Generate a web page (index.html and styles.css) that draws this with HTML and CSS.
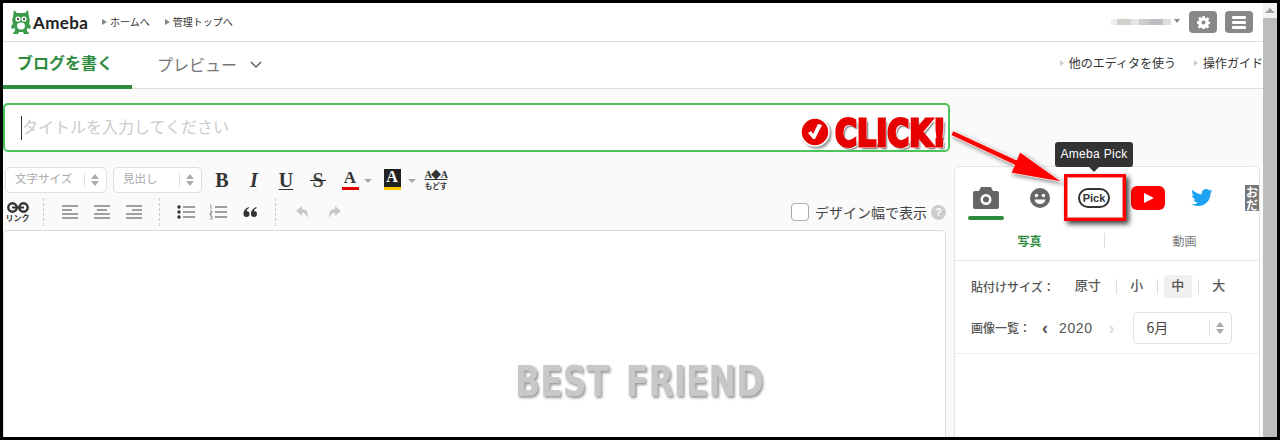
FILE: index.html
```html
<!DOCTYPE html>
<html lang="ja">
<head>
  <meta charset="UTF-8">
  <title>Ameba ブログを書く</title>
  <link rel="stylesheet" href="styles.css">
</head>
<body>
  <div class="frame">
    <div class="page">
      <header class="topbar">
        <div class="logo">
          <svg width="20" height="24" viewBox="0 0 20 24"><path fill="#3b9c4b" d="M3 0l3 3h8l3-3 1 7c1 2 1 5 0 7l2 2-1 3-3-1v3l2 2v1h-5l-1-2H8l-1 2H2v-1l2-2v-3l-3 1-1-3 2-2c-1-2-1-5 0-7z"/><circle cx="7" cy="9" r="2.6" fill="#fff"/><circle cx="13" cy="9" r="2.6" fill="#fff"/><circle cx="7" cy="9" r="1.1" fill="#222"/><circle cx="13" cy="9" r="1.1" fill="#222"/><ellipse cx="10" cy="16" rx="4" ry="3.4" fill="#fff"/></svg>
          <span class="logo-text">Ameba</span>
        </div>
        <a class="nav-link">ホームへ</a>
        <a class="nav-link">管理トップへ</a>
        <div class="user">
          <span class="blur-name"><i class="b1"></i><i class="b2"></i><i class="b3"></i><i class="b4"></i><i class="b5"></i><i class="b6"></i></span>
          <span class="caret"></span>
        </div>
        <button class="head-btn">
          <svg width="13" height="13" viewBox="0 0 16 16"><path fill="#fff" fill-rule="evenodd" d="M6.600 0h2.800l.4 2.200 1.300.6 1.900-1.300 2 2-1.300 1.900.6 1.300 2.200.4v2.800l-2.200.4-.6 1.300 1.300 1.900-2 2-1.900-1.300-1.300.6-.4 2.200H6.600l-.4-2.200-1.300-.6-1.900 1.300-2-2 1.300-1.900-.6-1.300L0 9.400V6.600l2.200-.4.6-1.300-1.300-1.900 2-2 1.900 1.300 1.300-.6zM8 5.500a2.500 2.500 0 1 0 0 5 2.500 2.500 0 0 0 0-5z"/></svg>
        </button>
        <button class="head-btn menu-btn">
          <span></span><span></span><span></span>
        </button>
      </header>

      <nav class="tabs">
        <a class="tab tab-active">ブログを書く</a>
        <a class="tab tab-preview">プレビュー
          <svg width="12" height="8" viewBox="0 0 12 8"><path d="M1 1l5 5 5-5" fill="none" stroke="#666" stroke-width="1.5"/></svg>
        </a>
        <div class="tab-links">
          <a class="guide-link">他のエディタを使う</a>
          <a class="guide-link">操作ガイド</a>
        </div>
      </nav>

      <main class="main">
        <div class="title-box"><span class="text-caret"></span>タイトルを入力してください</div>

        <div class="columns">
          <section class="editor-col">
            <div class="tool-row">
              <div class="select select-size"><span>文字サイズ</span><span class="updown"></span></div>
              <div class="select select-head"><span>見出し</span><span class="updown"></span></div>
              <span class="tool serif">B</span>
              <span class="tool serif italic">I</span>
              <span class="tool serif under">U</span>
              <span class="tool serif strike">S</span>
              <span class="tool serif"><span class="color-a">A</span></span>
              <span class="drop drop-a"></span>
              <span class="tool serif tool-mark"><span class="mark-a">A</span></span>
              <span class="drop"></span>
              <span class="reset"><b>A◆A</b><small>もどす</small></span>
            </div>

            <div class="tool-row tool-row2">
              <span class="link-tool">
                <svg width="24" height="11" viewBox="0 0 24 11"><g fill="none" stroke="#333" stroke-width="2.4"><circle cx="6.5" cy="5.5" r="4.2"/><circle cx="17.5" cy="5.5" r="4.2"/></g><path d="M6 5.5h12" stroke="#333" stroke-width="2"/></svg>
                <small>リンク</small>
              </span>
              <span class="sep"></span>
              <div class="group group-first">
                <span class="tool"><svg width="16" height="14" viewBox="0 0 16 14"><path d="M0 1h16M0 5h10M0 9h16M0 13h16" stroke="#444" stroke-width="1"/></svg></span>
                <span class="tool"><svg width="16" height="14" viewBox="0 0 16 14"><path d="M0 1h16M3 5h10M0 9h16M0 13h16" stroke="#444" stroke-width="1"/></svg></span>
                <span class="tool"><svg width="16" height="14" viewBox="0 0 16 14"><path d="M0 1h16M6 5h10M0 9h16M0 13h16" stroke="#444" stroke-width="1"/></svg></span>
              </div>
              <span class="sep"></span>
              <div class="group">
                <span class="tool"><svg width="18" height="14" viewBox="0 0 18 14"><g fill="#333"><circle cx="2" cy="2" r="1.7"/><circle cx="2" cy="7" r="1.7"/><circle cx="2" cy="12" r="1.7"/></g><path d="M6 2h12M6 7h12M6 12h12" stroke="#444" stroke-width="1"/></svg></span>
                <span class="tool"><svg width="18" height="16" viewBox="0 0 18 16"><path d="M1 1h1v4M1 7h2v2H1v2h2M1 12h2v3H1" fill="none" stroke="#777" stroke-width=".8"/><path d="M6 3h12M6 8h12M6 13h12" stroke="#444" stroke-width="1"/></svg></span>
                <span class="tool"><svg width="14" height="11" viewBox="0 0 14 11"><path fill="#333" d="M6 0C3 1 .5 3 .5 7a3 3 0 1 0 3-3c0-1 1-2 2.500-3zM13.500 0c-3 1-5.500 3-5.500 7a3 3 0 1 0 3-3c0-1 1-2 2.500-3z"/></svg></span>
              </div>
              <span class="sep"></span>
              <div class="group group-last">
                <span class="tool"><svg width="13" height="13" viewBox="0 0 13 13"><path fill="#c8c8c8" d="M6 0L0 5l6 5V7c3 0 4.500 1.500 5 5 2-5 0-9-5-9z"/></svg></span>
                <span class="tool"><svg width="13" height="13" viewBox="0 0 13 13"><path fill="#c8c8c8" d="M7 0l6 5-6 5V7c-3 0-4.500 1.500-5 5-2-5 0-9 5-9z"/></svg></span>
              </div>
              <label class="design-width"><span class="check"></span>デザイン幅で表示<span class="help">?</span></label>
            </div>

            <div class="editor"></div>
          </section>

          <aside class="side">
            <div class="side-icons">
              <span class="side-icon side-icon-on">
                <svg width="26" height="22" viewBox="0 0 26 22"><path fill="#666" fill-rule="evenodd" d="M8 0h10l2 4h4a2 2 0 0 1 2 2v14a2 2 0 0 1-2 2H2a2 2 0 0 1-2-2V6a2 2 0 0 1 2-2h4zM13 7a5.500 5.500 0 1 0 0 11 5.500 5.500 0 0 0 0-11zm0 2.500a3 3 0 1 1 0 6 3 3 0 0 1 0-6z"/></svg>
              </span>
              <span class="side-icon">
                <svg width="20" height="20" viewBox="0 0 20 20"><circle cx="10" cy="10" r="10" fill="#666"/><circle cx="6.500" cy="7.500" r="1.700" fill="#fff"/><circle cx="13.500" cy="7.500" r="1.700" fill="#fff"/><path d="M4.500 11.500h11c-.5 3-3 4.500-5.500 4.500s-5-1.500-5.500-4.500z" fill="#fff"/></svg>
              </span>
              <span class="side-icon"><span class="pick-badge">Pick</span></span>
              <span class="side-icon">
                <svg width="34" height="24" viewBox="0 0 34 24"><rect width="34" height="24" rx="6" fill="#f00"/><path d="M13 7l10 5-10 5z" fill="#fff"/></svg>
              </span>
              <span class="side-icon">
                <svg width="22" height="18" viewBox="0 0 24 20"><path fill="#1da1f2" d="M24 2.400c-.9.400-1.800.7-2.800.8 1-.6 1.800-1.600 2.200-2.700-1 .6-2 1-3.100 1.200A4.900 4.900 0 0 0 11.900 6.200C7.800 6 4.200 4 1.700.9c-1.300 2.200-.6 5.100 1.500 6.500-.8 0-1.600-.2-2.200-.6 0 2.400 1.700 4.400 3.900 4.900-.7.200-1.500.2-2.200.1.600 2 2.400 3.400 4.600 3.400A9.900 9.900 0 0 1 0 16.700 14 14 0 0 0 7.500 19c9.100 0 14.300-7.700 14-14.600 1-.7 1.800-1.500 2.500-2z"/></svg>
              </span>
              <span class="side-icon"><span class="odai">お<br>だ</span></span>
            </div>

            <div class="sub-tabs">
              <span class="sub-tab sub-tab-on">写真</span>
              <span class="sub-line"></span>
              <span class="sub-tab sub-tab-video">動画</span>
            </div>

            <div class="side-opts">
              <div class="opt-row">
                <span class="opt-label opt-label-size">貼付けサイズ：</span>
                <span class="size-item size-full">原寸</span>
                <span class="size-sep"></span>
                <span class="size-item">小</span>
                <span class="size-sep"></span>
                <span class="size-item size-on">中</span>
                <span class="size-sep"></span>
                <span class="size-item">大</span>
              </div>
              <div class="opt-row opt-row2">
                <span class="opt-label">画像一覧：</span>
                <span class="year-arrow">‹</span>
                <span class="year">2020</span>
                <span class="year-arrow year-next">›</span>
                <div class="select select-month"><span>6月</span><span class="updown"></span></div>
              </div>
            </div>
          </aside>
        </div>
      </main>
    </div>

    <div class="scrollbar"><span class="scroll-up"></span><span class="scroll-thumb"></span></div>

    <!-- annotations pasted over the screenshot -->
    <div class="watermark">BEST FRIEND</div>
    <svg class="click-icon" width="32" height="32" viewBox="0 0 32 32"><circle cx="15" cy="15" r="14" fill="#e60000" stroke="#fff" stroke-width="1.500"/><path d="M8 16l5 6 2 0 7-14-4-1-5 10-2-3z" fill="#fff"/></svg>
    <div class="click-text">CLICK!</div>
    <svg class="arrow" width="125" height="60" viewBox="0 0 125 60"><path d="M3 2.700L66.500 32 70 24l42 30-51-9 3.500-8L1 7.300z" fill="#f00" stroke="#fff" stroke-width=".8"/></svg>
    <div class="pick-box"></div>
    <div class="tooltip">Ameba Pick</div>
  </div>
</body>
</html>
```

FILE: styles.css
```css
* {
  box-sizing: border-box;
}
html, body {
  margin: 0;
  height: 440px;
  overflow: hidden;
}
body {
  font-family: "Noto Sans CJK JP", "Noto Sans", sans-serif;
  color: #333;
}
a {
  color: inherit;
}
button {
  border: none;
  padding: 0;
}

.frame {
  position: relative;
  display: flex;
  width: 1280px;
  height: 440px;
  border: 3px solid #000;
  background: #fff;
  overflow: hidden;
}
.page {
  display: flex;
  flex-direction: column;
  width: 1260px;
  flex: none;
  overflow: hidden;
}

/* top bar */
.topbar {
  display: flex;
  align-items: center;
  flex: none;
  height: 39px;
  padding: 0 10px 0 8px;
  border-bottom: 1px solid #ddd;
}
.logo {
  display: flex;
  align-items: center;
  width: 91px;
}
.logo-text {
  margin-left: 2px;
  font-family: "Lato", sans-serif;
  font-weight: 700;
  font-size: 17px;
  letter-spacing: .4px;
  line-height: 1;
  color: #222;
}
.nav-link {
  display: flex;
  align-items: center;
  margin-right: 15px;
  font-size: 10px;
  line-height: 1;
}
.nav-link::before {
  content: "";
  margin-right: 3px;
  border-left: 5px solid #888;
  border-top: 3px solid transparent;
  border-bottom: 3px solid transparent;
}
.user {
  display: flex;
  align-items: center;
  margin-left: auto;
  margin-right: 9px;
}
.blur-name {
  display: flex;
  width: 60px;
  height: 6px;
}
.blur-name i {
  display: block;
  height: 6px;
}
.b1 { width: 6px; background: #eee; }
.b2 { width: 14px; background: #d4d0cc; }
.b3 { width: 8px; background: #e4e4e8; }
.b4 { width: 10px; background: #ccc; }
.b5 { width: 14px; background: #c0bcc4; }
.b6 { width: 8px; background: #ddd; }
.caret {
  margin-left: 3px;
  margin-top: -3px;
  border-top: 4px solid #888;
  border-left: 3.500px solid transparent;
  border-right: 3.500px solid transparent;
}
.head-btn {
  display: flex;
  align-items: center;
  justify-content: center;
  width: 28px;
  height: 22px;
  background: #888;
  border-radius: 4px;
}
.menu-btn {
  flex-direction: column;
  gap: 2px;
  margin-left: 8px;
}
.menu-btn span {
  width: 14px;
  height: 3px;
  background: #fff;
  border-radius: 1px;
}

/* tabs */
.tabs {
  display: flex;
  align-items: stretch;
  flex: none;
  height: 47px;
  border-bottom: 1px solid #ddd;
}
.tab {
  display: flex;
  align-items: center;
  font-size: 16px;
  line-height: 1;
  margin-bottom: -1px;
  padding-bottom: 4px;
}
.tab-active {
  width: 129px;
  padding-left: 14px;
  font-weight: 700;
  color: #2e8b3e;
  border-bottom: 4px solid #2e8b3e;
}
.tab-preview {
  margin-left: 25px;
  color: #777;
}
.tab-preview svg {
  margin: 3px 0 0 13px;
}
.tab-links {
  display: flex;
  align-items: center;
  margin-left: auto;
  padding-bottom: 4px;
  white-space: nowrap;
}
.guide-link {
  display: flex;
  align-items: center;
  margin-left: 18px;
  font-size: 12px;
  line-height: 1;
}
.guide-link::before {
  content: "";
  margin-right: 5px;
  border-left: 4px solid #ccc;
  border-top: 3px solid transparent;
  border-bottom: 3px solid transparent;
}

/* main area */
.main {
  flex: 1;
  padding-top: 14px;
  background: #fafafa;
}
.title-box {
  position: relative;
  display: flex;
  align-items: center;
  width: 947px;
  height: 49px;
  padding: 0 0 4px 17px;
  border: 2px solid #4bc55a;
  border-radius: 5px;
  background: #fff;
  font-size: 16px;
  line-height: 1;
  color: #ccc;
}
.text-caret {
  position: absolute;
  left: 16px;
  top: 11px;
  width: 1px;
  height: 24px;
  background: #333;
}
.columns {
  display: flex;
  margin-top: 14px;
}
.editor-col {
  width: 943px;
  flex: none;
}
.tool-row {
  display: flex;
  align-items: center;
  height: 27px;
  padding-left: 2px;
}
.tool-row2 {
  height: 28px;
  margin-top: 5px;
  padding-left: 0;
}
.select {
  display: flex;
  align-items: center;
  height: 26px;
  padding-left: 9px;
  border: 1px solid #e0e0e0;
  border-radius: 5px;
  background: #fff;
  font-size: 11.500px;
  line-height: 1;
  color: #aaa;
}
.select > span:first-child {
  padding-bottom: 2px;
}
.select-size {
  width: 102px;
}
.select-head {
  width: 89px;
  margin-left: 6px;
  margin-right: 4px;
}
.updown {
  position: relative;
  width: 20px;
  height: 14px;
  margin-left: auto;
  margin-right: 2px;
  border-left: 1px solid #ddd;
}
.updown::before,
.updown::after {
  content: "";
  position: absolute;
  left: 6px;
  border-left: 4px solid transparent;
  border-right: 4px solid transparent;
}
.updown::before {
  top: 1px;
  border-bottom: 5px solid #aaa;
}
.updown::after {
  bottom: 1px;
  border-top: 5px solid #aaa;
}
.tool {
  display: flex;
  align-items: center;
  justify-content: center;
  width: 32px;
  flex: none;
}
.serif {
  font-family: "Liberation Serif", serif;
  font-weight: 700;
  font-size: 20px;
  line-height: 1;
  color: #333;
}
.italic {
  font-style: italic;
}
.under {
  text-decoration: underline;
  text-underline-offset: 2px;
  text-decoration-thickness: 1px;
}
.strike {
  position: relative;
  color: #444;
}
.strike::after {
  content: "";
  position: absolute;
  left: 8px;
  top: 10px;
  width: 16px;
  height: 1px;
  background: #222;
}
.color-a {
  display: block;
  width: 17px;
  height: 21px;
  text-align: center;
  font-size: 17px;
  border-bottom: 3px solid #e60000;
}
.mark-a {
  display: block;
  width: 17px;
  height: 21px;
  text-align: center;
  font-size: 16px;
  color: #fff;
  background: #222;
  border-bottom: 3px solid #ffc800;
}
.tool-mark {
  margin-left: 4px;
}
.drop {
  flex: none;
  width: 8px;
  margin-top: 3px;
  border-top: 4px solid #aaa;
  border-left: 4px solid transparent;
  border-right: 4px solid transparent;
}
.drop-a {
  margin-left: -2px;
}
.reset {
  display: flex;
  flex-direction: column;
  align-items: center;
  width: 24px;
  margin-left: 8px;
  line-height: 1;
}
.reset b {
  font-family: "Liberation Serif", serif;
  font-size: 10px;
  letter-spacing: -.6px;
  text-decoration: underline;
  white-space: nowrap;
}
.reset small {
  margin-top: 2px;
  font-size: 7.500px;
  font-weight: 700;
  white-space: nowrap;
}
.link-tool {
  display: flex;
  flex-direction: column;
  align-items: center;
  width: 29px;
  margin-right: 11px;
  line-height: 1;
}
.link-tool small {
  margin-top: 1px;
  font-size: 8px;
  font-weight: 700;
  white-space: nowrap;
}
.sep {
  flex: none;
  height: 28px;
  border-left: 1px dashed #ccc;
}
.group {
  display: flex;
  margin-left: 10px;
  margin-right: 9px;
}
.group-last {
  margin-right: 0;
}
.design-width {
  display: flex;
  align-items: center;
  margin-left: auto;
  font-size: 14px;
  line-height: 1;
  color: #444;
}
.check {
  width: 18px;
  height: 18px;
  margin-right: 6px;
  background: #fff;
  border: 1px solid #aaa;
  border-radius: 4px;
}
.help {
  display: flex;
  align-items: center;
  justify-content: center;
  width: 15px;
  height: 15px;
  margin-left: 4px;
  border-radius: 50%;
  background: #ccc;
  color: #fff;
  font-family: "Liberation Sans", sans-serif;
  font-weight: 700;
  font-size: 11px;
}
.editor {
  height: 230px;
  margin-top: 4px;
  background: #fff;
  border: 1px solid #ddd;
  border-radius: 5px 5px 0 0;
}

/* right panel */
.side {
  width: 306px;
  flex: none;
  height: 300px;
  margin-left: 8px;
  background: #fff;
  border: 1px solid #e5e5e5;
  border-radius: 5px 5px 0 0;
  overflow: hidden;
}
.side-icons {
  display: flex;
  height: 53px;
  padding-left: 4px;
}
.side-icon {
  position: relative;
  display: flex;
  align-items: center;
  justify-content: center;
  width: 54px;
  height: 53px;
  flex: none;
  padding-top: 8px;
}
.side-icon-on::after {
  content: "";
  position: absolute;
  left: 9px;
  bottom: 0;
  width: 36px;
  height: 4px;
  background: #2e8b3e;
  border-radius: 2px;
}
.pick-badge {
  width: 32px;
  height: 20px;
  border: 2px solid #333;
  border-radius: 10px;
  text-align: center;
  font-family: "Liberation Sans", sans-serif;
  font-size: 11px;
  font-weight: 700;
  line-height: 16px;
  color: #333;
}
.odai {
  display: block;
  width: 22px;
  height: 26px;
  padding-left: 1px;
  background: #777;
  color: #fff;
  font-size: 12px;
  font-weight: 700;
  line-height: 13px;
}
.sub-tabs {
  display: flex;
  align-items: center;
  height: 41px;
  padding-top: 1px;
  border-bottom: 1px solid #e8e8e8;
}
.sub-tab {
  flex: none;
  width: 149px;
  text-align: center;
  font-size: 12px;
  line-height: 1;
  color: #777;
}
.sub-tab-video {
  width: 159px;
}
.sub-tab-on {
  color: #2e8b3e;
  font-weight: 700;
}
.sub-line {
  height: 15px;
  border-left: 1px solid #ddd;
}
.side-opts {
  height: 93px;
  padding: 13px 0 0 16px;
  border-bottom: 1px solid #eee;
}
.opt-row {
  display: flex;
  align-items: center;
  height: 24px;
}
.opt-row2 {
  height: 32px;
  margin-top: 14px;
  padding-bottom: 1px;
}
.opt-label {
  font-size: 12px;
  font-weight: 500;
  line-height: 1;
  color: #555;
  white-space: nowrap;
}
.opt-label-size {
  padding-top: 2px;
}
.size-item {
  display: flex;
  align-items: center;
  justify-content: center;
  height: 23px;
  width: 28px;
  padding-bottom: 3px;
  font-size: 13px;
  font-weight: 500;
  line-height: 1;
  color: #555;
}
.size-full {
  margin-left: 19px;
  margin-right: 8px;
}
.size-on {
  background: #f0f0f0;
  border-radius: 3px;
}
.size-sep {
  height: 15px;
  margin: 0 6px;
  border-left: 1px solid #ddd;
}
.year-arrow {
  margin-left: 11px;
  font-family: "Liberation Sans", sans-serif;
  font-size: 18px;
  font-weight: 700;
  line-height: 1;
  color: #555;
}
.year {
  margin-left: 11px;
  font-family: "Liberation Sans", sans-serif;
  font-size: 14px;
  letter-spacing: .6px;
  color: #555;
}
.year-next {
  margin-left: 16px;
  color: #ddd;
}
.select-month {
  width: 99px;
  height: 32px;
  margin-left: 18px;
  padding-left: 13px;
  font-size: 14px;
  color: #444;
}

/* scrollbar */
.scrollbar {
  display: flex;
  flex-direction: column;
  width: 14px;
  flex: none;
  background: #f1f1f1;
}
.scroll-up {
  align-self: center;
  margin-top: 5px;
  border-bottom: 5px solid #a0a0a0;
  border-left: 5px solid transparent;
  border-right: 5px solid transparent;
}
.scroll-thumb {
  flex: 1;
  margin-top: 5px;
  background: #bdbdbd;
}

/* annotations */
.watermark {
  position: absolute;
  left: 512px;
  top: 355px;
  font-family: "DejaVu Sans", sans-serif;
  font-weight: 700;
  font-size: 42px;
  line-height: 48px;
  word-spacing: 7px;
  white-space: nowrap;
  color: #c8c8c8;
  text-shadow: 2px 2px 3px #999;
  transform: scaleX(.785);
  transform-origin: left center;
}
.click-icon {
  position: absolute;
  left: 797px;
  top: 114px;
  filter: drop-shadow(2px 2px 1px rgba(0, 0, 0, .4));
}
.click-text {
  position: absolute;
  left: 832px;
  top: 108px;
  font-family: "DejaVu Sans", sans-serif;
  font-weight: 700;
  font-size: 38px;
  line-height: 44px;
  white-space: nowrap;
  color: #e60000;
  -webkit-text-stroke: 3px #e60000;
  text-shadow: 1px 1px 0 #fff, 2px 2px 0 #fff, 3px 3px 2px #666;
  transform: scaleX(.79);
  transform-origin: left center;
}
.arrow {
  position: absolute;
  left: 947px;
  top: 125px;
  filter: drop-shadow(2px 2px 2px rgba(0, 0, 0, .45));
}
.pick-box {
  position: absolute;
  left: 1061px;
  top: 171px;
  width: 62px;
  height: 47px;
  border: 3px solid #f00;
  outline: 1px solid #f88;
  outline-offset: -4px;
  box-shadow: 3px 3px 5px rgba(0, 0, 0, .75);
}
.tooltip {
  position: absolute;
  left: 1052px;
  top: 139px;
  width: 78px;
  height: 25px;
  background: #333;
  border-radius: 3px;
  text-align: center;
  font-family: "Liberation Sans", sans-serif;
  font-size: 12px;
  letter-spacing: .3px;
  line-height: 25px;
  color: #fff;
}
.tooltip::after {
  content: "";
  position: absolute;
  left: 34px;
  bottom: -5px;
  border-top: 5px solid #333;
  border-left: 5px solid transparent;
  border-right: 5px solid transparent;
}
```
